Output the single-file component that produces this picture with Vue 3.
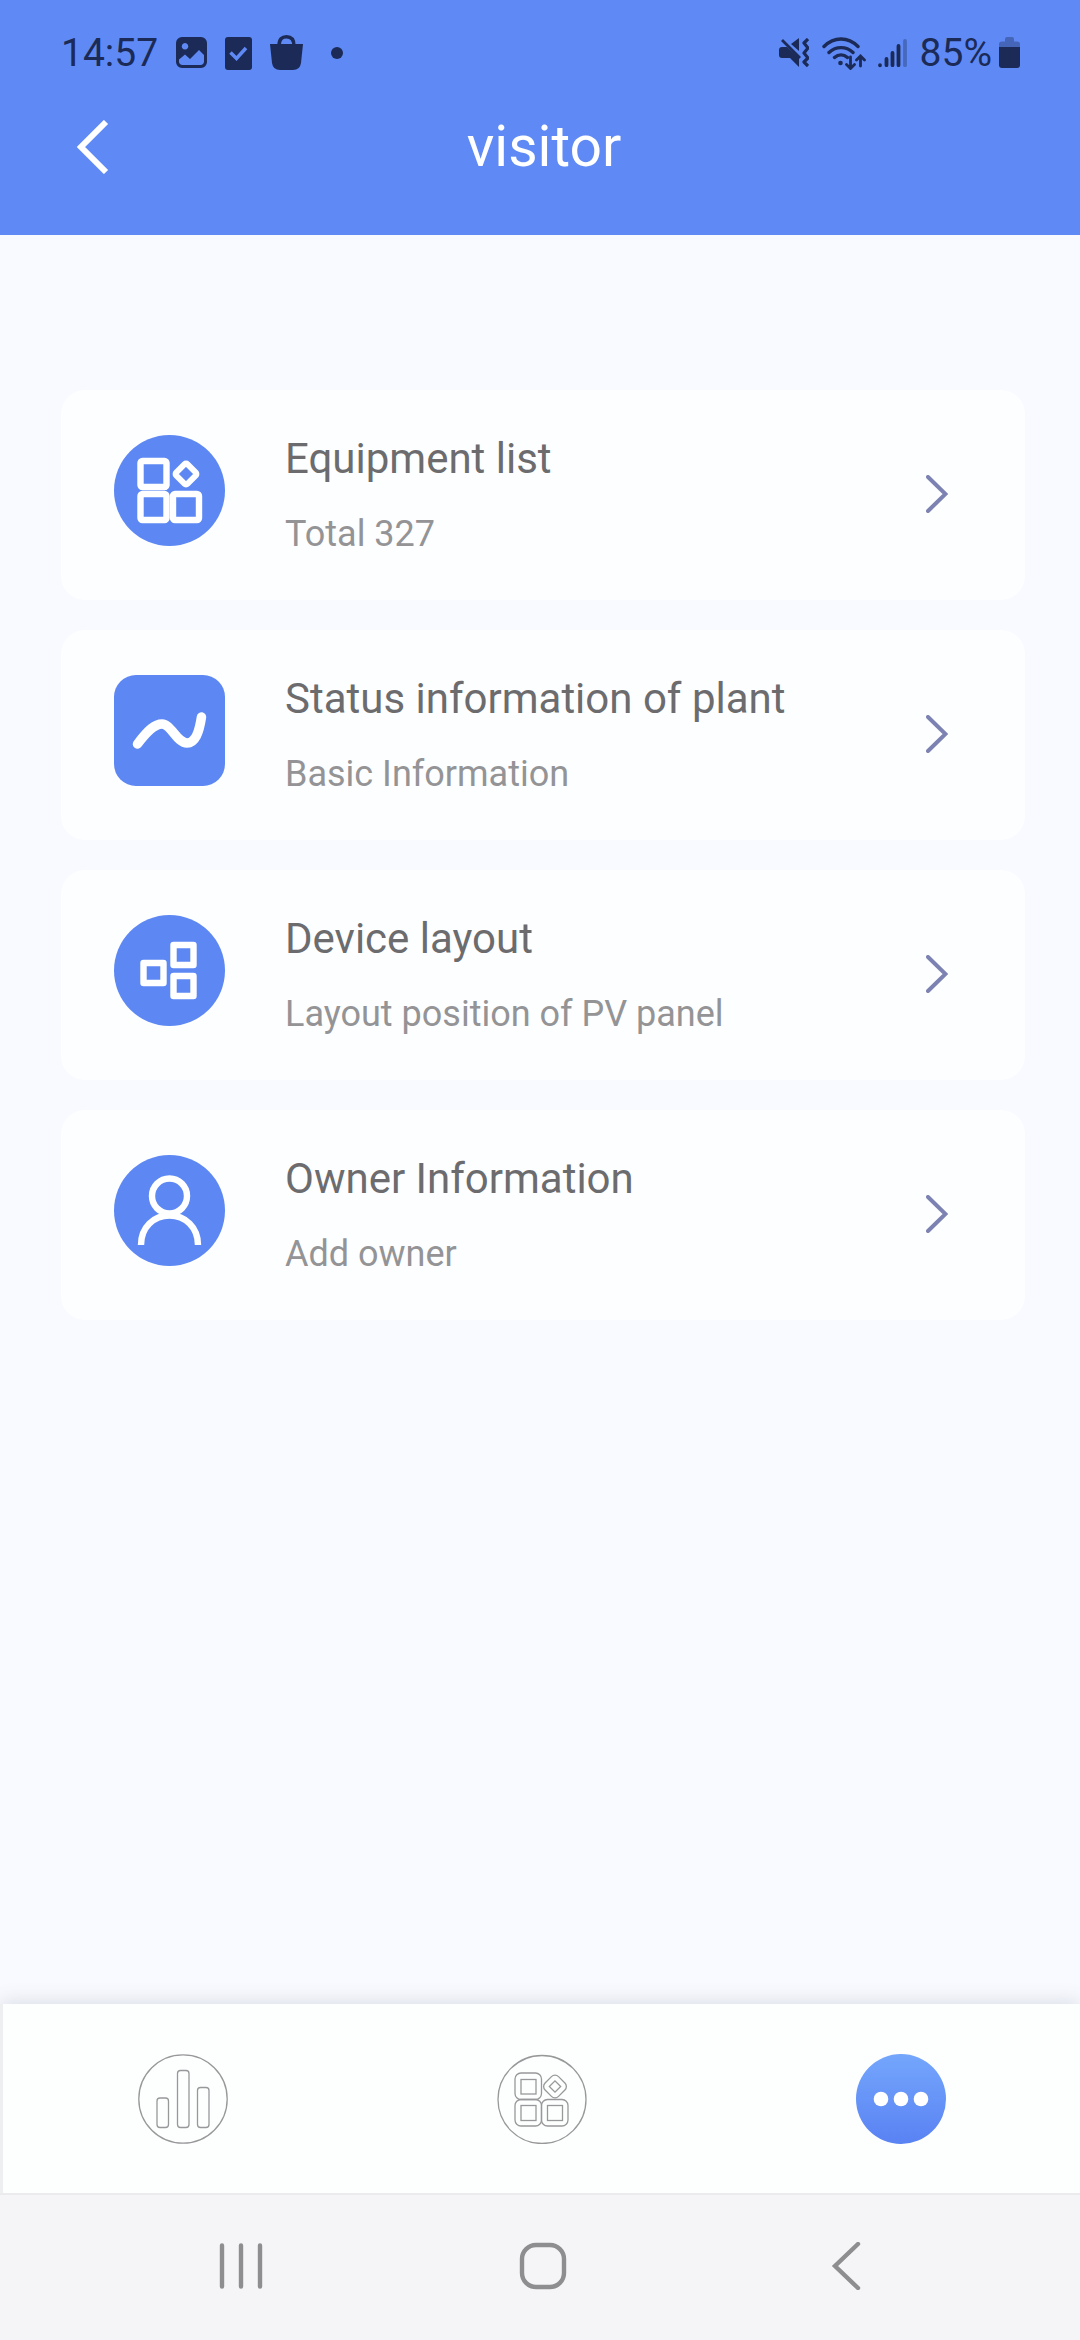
<script setup>
const entries = [
  { id: 'equipment', title: 'Equipment list', note: 'Total 327' },
  { id: 'status', title: 'Status information of plant', note: 'Basic Information' },
  { id: 'layout', title: 'Device layout', note: 'Layout position of PV panel' },
  { id: 'owner', title: 'Owner Information', note: 'Add owner' },
]
</script>

<template>
  <div class="screen">
    <header class="top">
      <div class="status">
        <div class="status-left">
          <span>14:57</span>
          <svg width="31" height="32" viewBox="0 0 31 32">
            <path fill="currentColor" fill-rule="evenodd" d="M6 0h19a6 6 0 0 1 6 6v19a6 6 0 0 1-6 6H6a6 6 0 0 1-6-6V6a6 6 0 0 1 6-6zM9 6a3.300 3.300 0 1 0 .01 0zM3 24.500c0 2 1.500 3.500 3.500 3.500h18c2 0 3.500-1.500 3.500-3.500V18l-5-5-9 9-5-4.500-6 5z" />
          </svg>
          <svg width="27" height="33" viewBox="0 0 27 33">
            <rect width="27" height="33" rx="3" fill="currentColor" />
            <path d="M5.500 15.500l6 6L21 11" fill="none" stroke="#5f8af5" stroke-width="3.500" />
          </svg>
          <svg width="33" height="36" viewBox="0 0 33 36">
            <path fill="currentColor" d="M0 9h33l-2 19q-1 7-8 7H10q-7 0-8-7z" />
            <path d="M9 11C9 4 12 1.800 16.500 1.800S24 4 24 11" fill="none" stroke="currentColor" stroke-width="3.500" />
          </svg>
          <span class="dot"></span>
        </div>
        <div class="status-right">
          <svg width="30" height="30" viewBox="0 0 30 30" fill="none" stroke="currentColor">
            <path fill="currentColor" stroke="none" d="M0 12q0-3 3-3h5l12 11v9l-9-9H3q-3 0-3-3zM12 6l8-6v13z" />
            <path d="M3 2l18 18" stroke-width="2.800" />
            <path d="M29 1l-4 4 4 5-4 5 4 5-4 4 4 4" stroke-width="3.200" stroke-linejoin="round" />
          </svg>
          <svg class="s-wifi" width="45" height="33" viewBox="0 0 45 33" fill="none" stroke="currentColor" stroke-width="3.400" stroke-linecap="round">
            <path d="M2 9.500C12-.500 26-.500 36 9.500M7 15.500c7-6.500 17-6.500 24 0M12.500 20.500c4-3.500 9-3.500 13 0" />
            <circle cx="18.500" cy="26" r="2.300" fill="currentColor" stroke="none" />
            <path d="M28.500 20v11M24.500 27.500l4 4 4-4M38.500 29V19M34.500 23l4-4 4 4" stroke-width="2.800" />
          </svg>
          <svg class="s-signal" width="29" height="30" viewBox="0 0 29 30" fill="none" stroke="currentColor" stroke-width="3.800" stroke-linecap="round">
            <path d="M2 27.200v.1M8.500 21v6.200M14.500 15v12.200M20.500 8v19.200" />
            <path d="M27 3v24.200" opacity=".35" />
          </svg>
          <span>85%</span>
          <svg class="s-battery" width="21" height="32" viewBox="0 0 21 32" fill="currentColor">
            <path opacity=".38" d="M0 10V7q0-2.500 3-2.500h3V2q0-2 2-2h5q2 0 2 2v2.500h3q3 0 3 2.500v3z" />
            <path d="M0 10h21v18q0 3-3 3H3q-3 0-3-3z" />
          </svg>
        </div>
      </div>
      <div class="title-row">
        <button class="back" type="button" aria-label="Back">
          <svg width="32" height="54" viewBox="0 0 32 54" fill="none" stroke="currentColor" stroke-width="6">
            <path d="M29 2L4 27l25 25" />
          </svg>
        </button>
        <h1>visitor</h1>
      </div>
    </header>

    <main class="list">
      <a v-for="entry in entries" :key="entry.id" class="card" href="#">
        <svg class="icon" viewBox="0 0 111 111" fill="none" stroke="#fff" stroke-width="6.400">
          <rect v-if="entry.id === 'status'" width="111" height="111" rx="22" class="disc" />
          <circle v-else cx="55.500" cy="55.500" r="55.500" class="disc" />
          <g v-if="entry.id === 'equipment'">
            <rect x="26.500" y="26" width="26" height="26" rx="2" />
            <rect x="26.500" y="59" width="26" height="26" rx="2" />
            <rect x="59" y="59" width="26" height="26" rx="2" />
            <rect x="64" y="31" width="16" height="16" rx="2" stroke-width="5.800" transform="rotate(45 72 39)" />
          </g>
          <path v-else-if="entry.id === 'status'" d="M23.500 69C34 55 41 49 48 49c9 0 15 19 25 19 8 0 12-10 14.500-26" stroke-width="9.500" stroke-linecap="round" />
          <g v-else-if="entry.id === 'layout'" stroke-linejoin="round">
            <rect x="29.500" y="48" width="20" height="20" />
            <rect x="59.500" y="30" width="20" height="20" />
            <rect x="59.500" y="61" width="20" height="20" />
          </g>
          <g v-else>
            <circle cx="55.500" cy="41" r="17.500" />
            <path d="M27 90C27 72 40 60.500 55.500 60.500S84 72 84 90" />
          </g>
        </svg>
        <span class="text">
          <span class="name">{{ entry.title }}</span>
          <span class="note">{{ entry.note }}</span>
        </span>
        <svg class="chevron" width="22" height="38" viewBox="0 0 22 38" fill="none" stroke="currentColor" stroke-width="4" stroke-linecap="round">
          <path d="M2 2l17.500 17L2 36" />
        </svg>
      </a>
    </main>

    <nav class="tabs" aria-label="Sections">
      <button type="button" aria-label="Statistics">
        <svg width="90" height="90" viewBox="0 0 90 90" fill="none" stroke="currentColor" stroke-width="1.300">
          <circle cx="45" cy="45" r="44.200" />
          <rect x="19" y="44" width="11.500" height="29.500" rx="3" />
          <rect x="39.500" y="16.500" width="11.500" height="57" rx="3" />
          <rect x="59.500" y="33.500" width="11.500" height="40" rx="3" />
        </svg>
      </button>
      <button type="button" aria-label="Devices">
        <svg width="90" height="90" viewBox="0 0 90 90" fill="none" stroke="currentColor" stroke-width="1.300">
          <circle cx="45" cy="45.500" r="44" />
          <rect x="18" y="19" width="26.500" height="26.500" rx="6" />
          <rect x="18" y="45.500" width="26.500" height="26.500" rx="6" />
          <rect x="44.500" y="45.500" width="26.500" height="26.500" rx="6" />
          <rect x="24" y="25.500" width="15" height="14.500" />
          <rect x="24" y="51.500" width="15" height="15" />
          <rect x="50.500" y="51.500" width="15" height="15" />
          <rect x="48.500" y="23" width="19" height="19" rx="5" transform="rotate(45 58 32.500)" />
          <rect x="54" y="28.500" width="8" height="8" transform="rotate(45 58 32.500)" />
        </svg>
      </button>
      <button type="button" aria-label="More" aria-current="page">
        <svg width="90" height="90" viewBox="0 0 90 90">
          <defs>
            <linearGradient id="more-fill" x1="0" y1="0" x2="0" y2="1">
              <stop offset="0" stop-color="#74a6fc" />
              <stop offset="1" stop-color="#5982f3" />
            </linearGradient>
          </defs>
          <circle cx="45" cy="45" r="45" fill="url(#more-fill)" />
          <g fill="#fff">
            <circle cx="25" cy="45" r="7.300" />
            <circle cx="45" cy="45" r="7.300" />
            <circle cx="65" cy="45" r="7.300" />
          </g>
        </svg>
      </button>
    </nav>

    <nav class="system" aria-label="System">
      <button type="button" aria-label="Recent apps">
        <svg width="48" height="48" viewBox="0 0 48 48" fill="none" stroke="currentColor" stroke-width="4.400" stroke-linecap="round">
          <path d="M5 3.500v41M24 3.500v41M43 3.500v41" />
        </svg>
      </button>
      <button type="button" aria-label="Home">
        <svg width="48" height="48" viewBox="0 0 48 48" fill="none" stroke="currentColor" stroke-width="4.400">
          <rect x="3" y="3" width="42" height="42" rx="14" />
        </svg>
      </button>
      <button type="button" aria-label="System back">
        <svg width="48" height="48" viewBox="0 0 48 48" fill="none" stroke="currentColor" stroke-width="4.400" stroke-linecap="round">
          <path d="M36 2L13 24l23 22" />
        </svg>
      </button>
    </nav>
  </div>
</template>

<style>
body {
  margin: 0;
  background: #f8faff;
}
</style>

<style scoped>
.screen {
  display: flex;
  flex-direction: column;
  min-height: 100vh;
  background: #f8faff;
  font-family: Roboto, "Noto Sans", sans-serif;
}

svg {
  display: block;
  flex: none;
}

button {
  padding: 0;
  border: 0;
  background: none;
  color: inherit;
  font: inherit;
  cursor: pointer;
}

.top {
  padding-bottom: 47px;
  background: #5f8af5;
  color: #fff;
}

.status {
  display: flex;
  align-items: center;
  justify-content: space-between;
  height: 106px;
  padding: 0 60px 0 61px;
  color: #1b2a56;
  font-size: 39px;
}

.status-left,
.status-right {
  display: flex;
  align-items: center;
}

.status-left {
  gap: 18px;
}

.dot {
  width: 12px;
  height: 12px;
  margin-left: 10px;
  border-radius: 50%;
  background: currentColor;
}

.s-wifi {
  margin-left: 13px;
}

.s-signal {
  margin: 0 13px 0 11px;
}

.s-battery {
  margin-left: 7px;
}

.title-row {
  display: grid;
  grid-template-columns: 1fr auto 1fr;
  align-items: center;
  height: 82px;
  padding: 0 69px 0 77px;
}

.back {
  justify-self: start;
}

h1 {
  margin: 0;
  font-size: 57px;
  font-weight: 400;
  line-height: 64px;
}

.list {
  display: flex;
  flex: 1;
  flex-direction: column;
  gap: 30px;
  padding: 155px 55px 60px 61px;
}

.card {
  display: flex;
  align-items: center;
  gap: 60px;
  padding: 44px 77px 44px 53px;
  border-radius: 24px;
  background: #fdfeff;
  color: #6c6c6e;
  text-decoration: none;
}

.icon {
  width: 111px;
  height: 111px;
  margin-bottom: 9px;
}

.disc {
  fill: #5d88f3;
  stroke: none;
}

.text {
  display: flex;
  flex: 1;
  flex-direction: column;
  gap: 28px;
}

.name {
  font-size: 42px;
  line-height: 50px;
}

.note {
  color: #949496;
  font-size: 36px;
  line-height: 44px;
}

.chevron {
  margin-bottom: 3px;
  color: #7c82b2;
}

.tabs {
  display: grid;
  grid-template-columns: repeat(3, 1fr);
  place-items: center;
  height: 189px;
  border-left: 3px solid #eeeff1;
  background: #fdfefe;
  box-shadow: 0 -3px 18px rgba(90, 90, 110, 0.16);
  color: #98989a;
}

.system {
  position: relative;
  display: grid;
  grid-template-columns: repeat(3, 1fr);
  place-items: center;
  height: 142px;
  padding: 0 83px 3px 90px;
  border-top: 2px solid #ebebed;
  background: #f5f5f8;
  color: #8e8e90;
}
</style>
